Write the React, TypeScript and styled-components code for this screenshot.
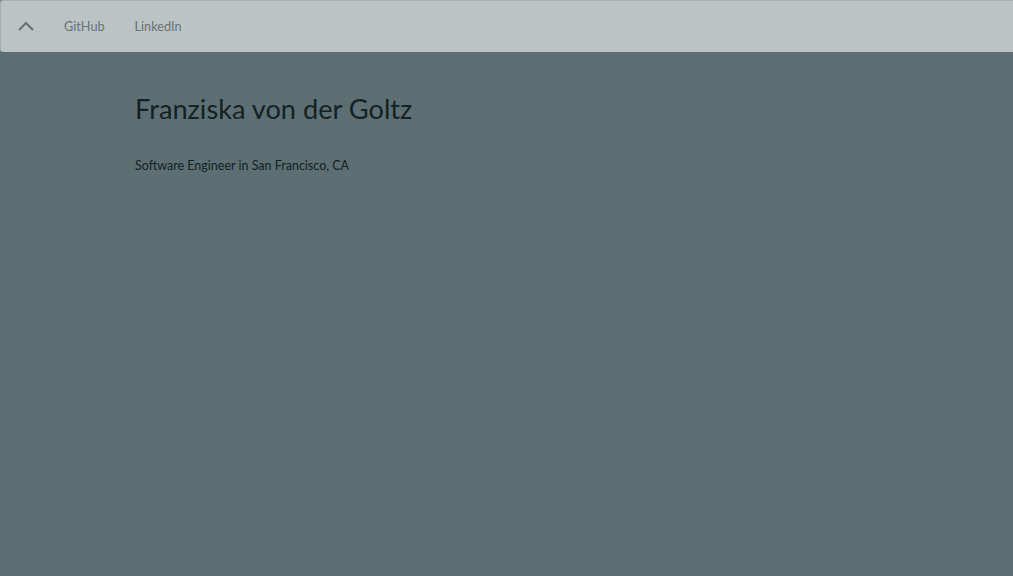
import React from "react";
import styled, { createGlobalStyle } from "styled-components";

const Global = createGlobalStyle`
  html, body { margin: 0; padding: 0; height: 100%; }
  body { background: #5d6f73; font-family: "Lato", "Liberation Sans", sans-serif; }
`;

const Page = styled.div`
  min-height: 576px;
  background: #5d6f73;
`;

const NavBar = styled.nav`
  box-sizing: border-box;
  height: 52px;
  display: flex;
  align-items: center;
  background: #bbc3c4;
  border-top: 1px solid #a4adaf;
  border-left: 1px solid #a4adaf;
  border-radius: 3px 0 0 3px;
  padding-left: 16px;
  padding-bottom: 2px;
`;

const Toggle = styled.button`
  border: none;
  background: none;
  padding: 0;
  width: 18px;
  height: 18px;
  display: flex;
  align-items: center;
  justify-content: center;
  margin-right: 29px;
`;

const NavLink = styled.a`
  font-family: "Lato", "Liberation Sans", sans-serif;
  font-size: 12.7px;
  color: #6a7274;
  text-decoration: none;
  margin-right: 30px;
`;

const Content = styled.main`
  padding: 40px 0 0 135px;
`;

const Name = styled.h1`
  margin: 0;
  font-family: "Lato", "Liberation Sans", sans-serif;
  font-weight: 400;
  font-size: 27.2px;
  line-height: 34px;
  color: #142224;
`;

const Tagline = styled.p`
  margin: 32px 0 0;
  font-family: "Lato", "Liberation Sans", sans-serif;
  font-size: 12.5px;
  color: #142224;
`;

export default function App() {
  return (
    <Page>
      <Global />
      <NavBar>
        <Toggle aria-label="toggle">
          <svg width="18" height="12" viewBox="0 0 18 12">
            <path d="M2 10 L9 3 L16 10" fill="none" stroke="#6a7274" strokeWidth="2.2" />
          </svg>
        </Toggle>
        <NavLink href="#">GitHub</NavLink>
        <NavLink href="#">LinkedIn</NavLink>
      </NavBar>
      <Content>
        <Name>Franziska von der Goltz</Name>
        <Tagline>Software Engineer in San Francisco, CA</Tagline>
      </Content>
    </Page>
  );
}
